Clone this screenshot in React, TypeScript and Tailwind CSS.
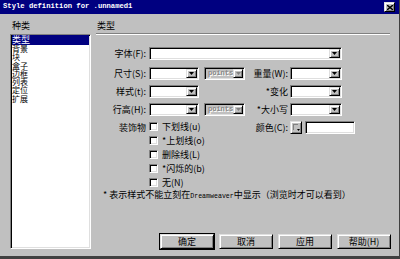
import React from 'react';

const sunken =
  'border border-t-[#808080] border-l-[#808080] border-r-white border-b-white shadow-[inset_1px_1px_0_#000000,inset_-1px_-1px_0_#dfdfdf]';
const raised =
  'border border-t-[#dfdfdf] border-l-[#dfdfdf] border-r-black border-b-black shadow-[inset_1px_1px_0_#ffffff,inset_-1px_-1px_0_#808080]';

function Arrow({ disabled }: { disabled?: boolean }) {
  return (
    <div className={`w-[11px] h-full bg-[#c0c0c0] flex items-center justify-center ${raised}`}>
      <svg width="5" height="3" viewBox="0 0 5 3">
        <path d="M0 0h5L2.5 3z" fill={disabled ? '#808080' : '#000'} />
      </svg>
    </div>
  );
}

function Select({ className, disabled, text }: { className: string; disabled?: boolean; text?: string }) {
  return (
    <div
      className={`h-[13px] p-px flex items-center ${sunken} ${disabled ? 'bg-[#c0c0c0]' : 'bg-white'} ${className}`}
    >
      <div className="flex-1 pl-[2px] font-['Liberation_Mono',monospace] font-bold text-[7px] leading-[11px] text-[#8a8a8a] [text-shadow:1px_1px_0_#ffffff]">
        {text}
      </div>
      <Arrow disabled={disabled} />
    </div>
  );
}

function Label({ children, className }: { children: React.ReactNode; className: string }) {
  return <div className={`text-right leading-[13px] whitespace-nowrap ${className}`}>{children}</div>;
}

function Check({ label }: { label: string }) {
  return (
    <div className="h-[14px] flex items-start">
      <div className={`mt-px w-[9px] h-[9px] bg-white ${sunken}`} />
      <span className="ml-[4px] leading-[11px] whitespace-nowrap">{label}</span>
    </div>
  );
}

function Button({ label, main }: { label: string; main?: boolean }) {
  return (
    <div
      className={`w-[54px] h-[15px] flex items-center justify-center leading-none ${
        main ? 'outline outline-1 outline-black' : ''
      } ${raised}`}
    >
      {label}
    </div>
  );
}

const categories = ['背景', '块', '盒子', '边框', '列表', '定位', '扩展'];

export default function App() {
  return (
    <div className="w-[400px] h-[259px] bg-[#c0c0c0] flex flex-col overflow-hidden border-r border-b-[3px] border-[#404040] text-black text-[9px] font-['Noto_Sans_CJK_SC',sans-serif]">
      {/* title bar */}
      <div className="h-[14px] bg-[#000080] flex items-center justify-between pl-[3px] pr-[4px]">
        <span className="text-white font-['Liberation_Mono',monospace] font-bold text-[7.2px] leading-none whitespace-pre">
          Style definition for .unnamed1
        </span>
        <div className={`w-[11px] h-[10px] bg-[#c0c0c0] flex items-center justify-center ${raised}`}>
          <svg width="6" height="5" viewBox="0 0 6 5">
            <path d="M0 0L6 5M6 0L0 5" stroke="#000" strokeWidth="1.4" />
          </svg>
        </div>
      </div>

      <div className="flex-1 flex pt-[6px] pb-[7px]">
        {/* categories */}
        <div className="ml-[10px] w-[81px] flex flex-col">
          <div className="h-[12px] mb-[2px] pl-[2px] leading-[12px]">种类</div>
          <div className={`flex-1 bg-white px-px ${sunken}`}>
            <div className="h-[10px] leading-[10px] bg-[#000080] text-white">类型</div>
            {categories.map((c) => (
              <div key={c} className="text-[8px] leading-[8.3px] h-[8.3px]">
                {c}
              </div>
            ))}
          </div>
        </div>

        {/* panel */}
        <div className="ml-[5px] w-[295px] flex flex-col">
          <div className="h-[12px] pl-[1px] leading-[12px]">类型</div>
          <div className="mt-px w-[294px] h-[2px] border-t border-t-[#808080] border-b border-b-white" />

          <div className="mt-[12px] flex flex-col">
            <div className="flex h-[13px] mb-[7px]">
              <Label className="w-[50px] mr-[3px]">字体(F):</Label>
              <Select className="w-[193px]" />
            </div>
            <div className="flex h-[13px] mb-[5px]">
              <Label className="w-[50px] mr-[3px]">尺寸(S):</Label>
              <Select className="w-[50px]" />
              <Select className="w-[41px] ml-[5px]" disabled text="points" />
              <Label className="w-[45px] pr-[2px]">重量(W):</Label>
              <Select className="w-[52px]" />
            </div>
            <div className="flex h-[13px] mb-[5px]">
              <Label className="w-[50px] mr-[3px]">样式(t):</Label>
              <Select className="w-[50px]" />
              <div className="w-[46px]" />
              <Label className="w-[45px] pr-[2px]">*变化</Label>
              <Select className="w-[52px]" />
            </div>
            <div className="flex h-[13px] mb-[5px]">
              <Label className="w-[50px] mr-[3px]">行高(H):</Label>
              <Select className="w-[50px]" />
              <Select className="w-[41px] ml-[5px]" disabled text="points" />
              <Label className="w-[45px] pr-[2px]">*大小写</Label>
              <Select className="w-[52px]" />
            </div>
            <div className="flex items-start">
              <Label className="w-[50px] mr-[3px]">装饰物</Label>
              <div className="w-[96px] flex flex-col">
                <Check label="下划线(u)" />
                <Check label="*上划线(o)" />
                <Check label="删除线(L)" />
                <Check label="*闪烁的(b)" />
                <Check label="无(N)" />
              </div>
              <Label className="w-[45px] pr-[2px]">颜色(C):</Label>
              <div className={`w-[12px] h-[13px] bg-[#c0c0c0] relative ${raised}`}>
                <div className="absolute left-[2px] top-[2px] w-[5px] h-[6px] border-t border-l border-[#808080]" />
                <svg className="absolute right-[1px] bottom-[2px]" width="3" height="2" viewBox="0 0 3 2">
                  <path d="M0 0h3L1.5 2z" fill="#000" />
                </svg>
              </div>
              <div className={`ml-[3px] w-[50px] h-[13px] bg-white ${sunken}`} />
            </div>
          </div>

          <div className="-mt-[1px] pl-[7px] leading-[10px] whitespace-nowrap">
            * 表示样式不能立刻在
            <span className="font-['Liberation_Mono',monospace] text-[6.6px]">Dreamweaver</span>
            中显示（浏览时才可以看到）
          </div>

          <div className="mt-auto flex justify-end gap-[5px]">
            <Button label="确定" main />
            <Button label="取消" />
            <Button label="应用" />
            <Button label="帮助(H)" />
          </div>
        </div>
      </div>
    </div>
  );
}
